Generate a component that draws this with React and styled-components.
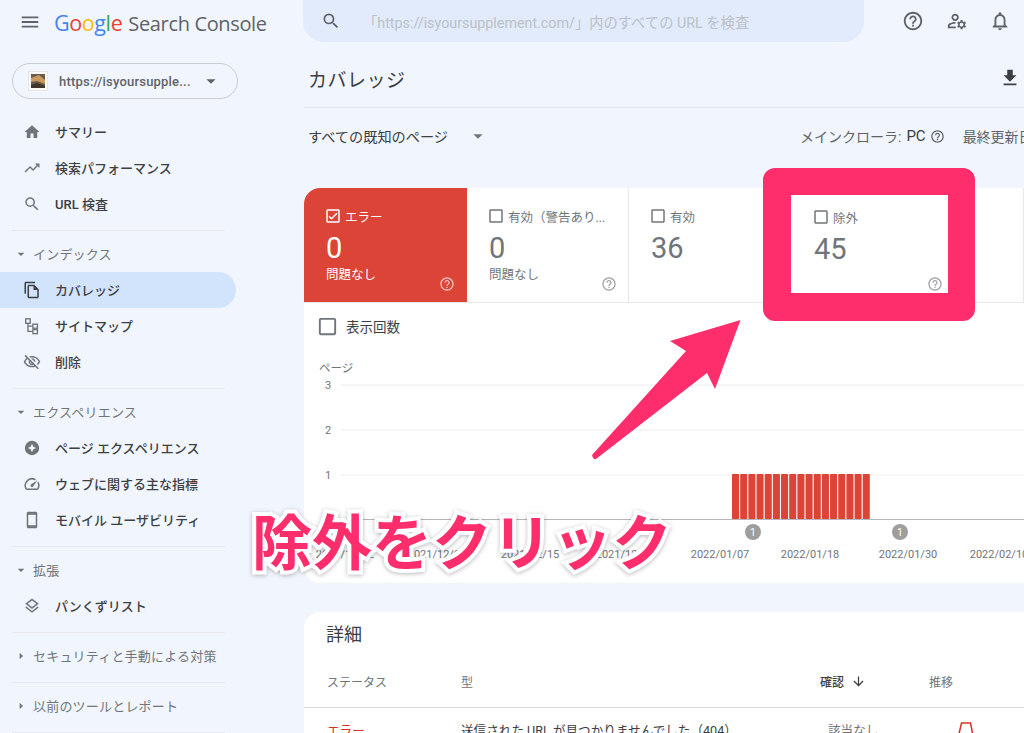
import React from 'react'
import styled, { createGlobalStyle } from 'styled-components'
import {
  MdMenu, MdHome, MdTrendingUp, MdSearch, MdOutlineFileCopy, MdOutlineVisibilityOff, MdOutlineSpeed,
  MdOutlineSmartphone, MdOutlineLayers, MdHelpOutline, MdOutlineManageAccounts, MdOutlineNotifications,
  MdFileDownload, MdArrowDropDown, MdArrowRight, MdOutlineCheckBox, MdCheckBoxOutlineBlank, MdArrowDownward,
} from 'react-icons/md'

const JP = `Roboto, "Noto Sans CJK JP", sans-serif`

const GlobalStyle = createGlobalStyle`
  html, body { margin: 0; padding: 0; }
  body { background: #f1f5fd; font-family: ${JP}; color: #3c4043; }
  * { box-sizing: border-box; }
`

const Page = styled.div`
  position: relative;
  width: 1024px;
  height: 733px;
  overflow: hidden;
  display: grid;
  grid-template-columns: 304px 720px;
  background: #f1f5fd;
`

const Sidebar = styled.aside`
  display: flex;
  flex-direction: column;
  min-width: 0;
`

const Brand = styled.div`
  height: 44px;
  display: flex;
  align-items: center;
  padding-left: 19px;
  color: #5f6368;
`

const Logo = styled.div`
  margin-left: 13px;
  display: flex;
  align-items: baseline;
  font-family: "Open Sans", sans-serif;
  font-size: 20px;
  letter-spacing: -0.35px;
  white-space: nowrap;
  color: #5f6368;
`

const GoogleWord = styled.span`
  margin-right: 6px;
  font-size: 21.5px;
  letter-spacing: -0.4px;
`

const Letter = styled.span`
  color: ${p => p.$c};
`

const PropertyPicker = styled.div`
  margin: 19px 0 0 12px;
  width: 226px;
  height: 36px;
  border: 1px solid #c9ccd1;
  border-radius: 18px;
  display: flex;
  align-items: center;
  padding-left: 15px;
  font-size: 13px;
  font-weight: 500;
  letter-spacing: 0.2px;
  color: #5f6368;
  svg.fav { margin-right: 11px; }
`

const PickerCaret = styled.span`
  display: flex;
  margin-left: 9px;
  color: #5f6368;
`

const NavList = styled.nav`
  margin-top: 15px;
  display: flex;
  flex-direction: column;
  width: 236px;
`

const NavItem = styled.div`
  height: 36px;
  display: flex;
  align-items: center;
  padding: 0 0 2px 23px;
  font-size: 13px;
  font-weight: 500;
  white-space: nowrap;
  color: #3c4043;
  border-radius: 0 18px 18px 0;
  background: ${p => (p.$active ? '#d2e3fc' : 'transparent')};
  svg { color: ${p => (p.$active ? '#3c4043' : '#70757a')}; flex: none; margin: 2px 14px 0 0; }
`

const Divider = styled.div`
  height: 1px;
  width: 213px;
  margin: ${p => p.$mt || 0}px 0 0 12px;
  background: #e6e8ee;
`

const SectionTitle = styled.div`
  height: ${p => p.$h}px;
  display: flex;
  align-items: center;
  padding: ${p => p.$top || 0}px 0 ${p => p.$bottom || 0}px 13px;
  font-size: 13px;
  letter-spacing: 0.2px;
  white-space: nowrap;
  color: #70757a;
  svg { flex: none; margin-right: 4px; }
`

const Main = styled.main`
  display: flex;
  flex-direction: column;
  min-width: 0;
`

const TopBar = styled.header`
  height: 44px;
  display: flex;
  align-items: flex-start;
`

const SearchBox = styled.div`
  width: 561px;
  height: 42px;
  margin-left: -1px;
  background: #e1ebfc;
  border-radius: 0 0 21px 21px;
  display: flex;
  align-items: center;
  padding-left: 18px;
  font-size: 14.3px;
  white-space: nowrap;
  color: #bcc0c7;
  svg { color: #5f6368; margin-right: 22px; flex: none; }
`

const TopIcons = styled.div`
  display: flex;
  align-items: center;
  gap: 21.5px;
  height: 42px;
  margin-left: 38px;
  color: #5f6368;
`

const TitleRow = styled.div`
  height: 64px;
  display: flex;
  align-items: center;
  justify-content: space-between;
  padding: 5px 3px 0 4px;
  border-bottom: 1px solid #e3e5ea;
`

const Title = styled.h1`
  margin: 0;
  font-size: 19px;
  font-weight: 400;
  letter-spacing: 0.5px;
  color: #3c4043;
`

const DownloadIcon = styled.span`
  display: flex;
  color: #3c4043;
`

const FilterRow = styled.div`
  height: 58px;
  display: flex;
  align-items: center;
  padding: 0 0 2px 4px;
  font-size: 14.2px;
  white-space: nowrap;
  color: #3c4043;
`

const FilterCaret = styled.span`
  display: flex;
  margin-left: 19px;
  color: #70757a;
`

const FilterRight = styled.div`
  margin-left: auto;
  display: flex;
  align-items: center;
  font-size: 14px;
  color: #5f6368;
  width: 224px;
  overflow: hidden;
  flex: none;
  strong { font-weight: 400; font-size: 15px; color: #3c4043; margin-left: 5px; }
  svg { margin: 0 18px 0 4px; flex: none; }
`

const Cards = styled.div`
  margin-top: 22px;
  display: grid;
  grid-template-columns: 163px 162px 162px 162px 1fr;
  height: 115px;
  background: #fff;
  border-radius: 16px 0 0 0;
  overflow: hidden;
  border-bottom: 1px solid #e6e8ee;
`

const Card = styled.div`
  position: relative;
  padding: 19px 10px 0 22px;
  background: ${p => (p.$error ? '#db4437' : '#fff')};
  color: ${p => (p.$error ? '#fff' : '#70757a')};
  border-right: 1px solid ${p => (p.$error ? '#db4437' : '#e6e8ee')};
`

const CardLabel = styled.div`
  display: flex;
  align-items: center;
  font-size: 12.5px;
  white-space: nowrap;
  height: 18px;
  svg { flex: none; margin: 0 3px 0 -2px; }
`

const CardValue = styled.div`
  font-size: 29px;
  line-height: 34px;
  margin-top: 6px;
`

const CardNote = styled.div`
  font-size: 12.5px;
  line-height: 18px;
  margin-top: 1px;
`

const CardHelp = styled.span`
  position: absolute;
  right: 11px;
  bottom: 10px;
  display: flex;
  opacity: 0.65;
`

const ChartPanel = styled.section`
  height: 280px;
  background: #fff;
  border-radius: 0 0 0 16px;
  display: flex;
  flex-direction: column;
`

const ImpressionRow = styled.div`
  height: 48px;
  padding: 0 0 2px 12px;
  display: flex;
  align-items: center;
  font-size: 13.5px;
  color: #3c4043;
  svg { color: #70757a; margin-right: 7px; }
`

const DetailCard = styled.section`
  margin-top: 29px;
  flex: 1;
  background: #fff;
  border-radius: 16px 0 0 0;
`

const DetailTitle = styled.h2`
  margin: 0;
  height: 45px;
  padding: 9px 0 0 22px;
  font-size: 18px;
  line-height: 27px;
  font-weight: 400;
  color: #3c4043;
`

const TableRow = styled.div`
  display: grid;
  grid-template-columns: 134px 359px 109px 1fr;
  align-items: center;
  padding-left: 23px;
  height: ${p => p.$h}px;
  font-size: ${p => p.$size}px;
  white-space: nowrap;
  color: #70757a;
  border-bottom: ${p => (p.$line ? '1px solid #d9dbdf' : 'none')};
  padding-bottom: ${p => (p.$line ? 2 : 0)}px;
`

const SortHead = styled.span`
  display: flex;
  align-items: center;
  gap: 7px;
  font-weight: 500;
  color: #3c4043;
`

const ErrorCell = styled.span`
  color: #d93025;
`

const TypeCell = styled.span`
  color: #3c4043;
`

const MutedCell = styled.span`
  padding-left: 8px;
`

const TrendCell = styled.span`
  display: flex;
  padding-left: ${p => p.$indent || 0}px;
`

const Highlight = styled.div`
  position: absolute;
  left: 763px;
  top: 168px;
  width: 212px;
  height: 153px;
  border: solid #fe2e6c;
  border-width: 27px 27px 28px 28px;
  border-radius: 12px;
  background: #fff;
  padding: 13px 0 0 23px;
  color: #70757a;
`

const HighlightHelp = styled.span`
  position: absolute;
  right: 5px;
  bottom: 1px;
  display: flex;
  opacity: 0.65;
`

const ArrowOverlay = styled.svg`
  position: absolute;
  left: 585px;
  top: 315px;
`

const Callout = styled.div`
  position: absolute;
  left: 252px;
  top: 499px;
  font-family: "Noto Sans CJK JP", sans-serif;
  font-weight: 700;
  font-size: 60px;
  line-height: 80px;
  letter-spacing: 0;
  white-space: nowrap;
  color: #fe2e6c;
  -webkit-text-stroke: 8px #fff;
  paint-order: stroke fill;
  filter: drop-shadow(0 1px 2px rgba(0, 0, 0, 0.28));
`

const G_LETTERS = [['G', '#4285f4'], ['o', '#ea4335'], ['o', '#fbbc05'], ['g', '#4285f4'], ['l', '#34a853'], ['e', '#ea4335']]

const BAR_COUNT = 17
const DATES = [
  ['2021/11/22', 41], ['2021/12/03', 133], ['2021/12/15', 226], ['2021/12/26', 321],
  ['2022/01/07', 416], ['2022/01/18', 506], ['2022/01/30', 604], ['2022/02/10', 695],
]

function Favicon() {
  return (
    <svg className="fav" width="20" height="20" viewBox="0 0 20 20">
      <rect x="0.5" y="0.5" width="19" height="19" fill="#fbfaf7" stroke="#e8e6e1" />
      <rect x="3" y="3" width="14" height="14" fill="#6b5a4a" />
      <path d="M3 7 L11 4 L17 9 L17 13 L9 10 L3 11 Z" fill="#c9995f" />
      <path d="M3 14 L9 12 L17 15 L17 17 L3 17 Z" fill="#3f352d" />
    </svg>
  )
}

function SitemapIcon() {
  return (
    <svg width="18" height="18" viewBox="0 0 20 20" fill="none" stroke="currentColor" strokeWidth="1.5">
      <rect x="3" y="2" width="5" height="5" />
      <rect x="11" y="8" width="5" height="4.5" />
      <rect x="11" y="14" width="5" height="4.5" />
      <path d="M5.5 7 V16 H11 M5.5 10.2 H11" />
    </svg>
  )
}

function ExperienceIcon() {
  return (
    <svg width="18" height="18" viewBox="0 0 20 20">
      <circle cx="10" cy="10" r="8" fill="currentColor" />
      <path d="M10 5.2 L11.5 8.5 L14.8 10 L11.5 11.5 L10 14.8 L8.5 11.5 L5.2 10 L8.5 8.5 Z" fill="#f1f5fd" />
    </svg>
  )
}

function Chart() {
  return (
    <svg width="720" height="232" viewBox="0 0 720 232" fontFamily={JP}>
      <text x="15" y="21" fontSize="11.5" fill="#70757a">ページ</text>
      {[['3', 34], ['2', 79], ['1', 124]].map(([label, y]) => (
        <g key={label}>
          <text x="21" y={y + 4} fontSize="11" fill="#70757a">{label}</text>
          <line x1="37" x2="720" y1={y} y2={y} stroke="#ececef" />
        </g>
      ))}
      {Array.from({ length: BAR_COUNT }, (_, i) => (
        <rect key={i} x={428 + i * 8.17} y="123" width="7.1" height="45" rx="0.8" fill="#db4437" />
      ))}
      <line x1="37" x2="720" y1="168.5" y2="168.5" stroke="#b4b6ba" />
      {[449, 596].map(x => (
        <g key={x}>
          <circle cx={x} cy="181" r="8" fill="#9e9e9e" />
          <text x={x} y="185" fontSize="10.5" fill="#fff" textAnchor="middle">1</text>
        </g>
      ))}
      {DATES.map(([d, x]) => (
        <text key={d} x={x} y="207" fontSize="11" fill="#70757a" textAnchor="middle">{d}</text>
      ))}
    </svg>
  )
}

export default function App() {
  return (
    <Page>
      <GlobalStyle />
      <Sidebar>
        <Brand>
          <MdMenu size={22} />
          <Logo>
            <GoogleWord>{G_LETTERS.map(([ch, c], i) => <Letter key={i} $c={c}>{ch}</Letter>)}</GoogleWord>
            Search Console
          </Logo>
        </Brand>
        <PropertyPicker>
          <Favicon />
          https://isyoursupple...
          <PickerCaret><MdArrowDropDown size={22} /></PickerCaret>
        </PropertyPicker>
        <NavList>
          <NavItem><MdHome size={18} />サマリー</NavItem>
          <NavItem><MdTrendingUp size={18} />検索パフォーマンス</NavItem>
          <NavItem><MdSearch size={18} />URL 検査</NavItem>
          <Divider $mt={8} />
          <SectionTitle $h={41} $top={4}><MdArrowDropDown size={16} />インデックス</SectionTitle>
          <NavItem $active><MdOutlineFileCopy size={18} />カバレッジ</NavItem>
          <NavItem><SitemapIcon />サイトマップ</NavItem>
          <NavItem><MdOutlineVisibilityOff size={18} />削除</NavItem>
          <Divider $mt={8} />
          <SectionTitle $h={41} $top={4}><MdArrowDropDown size={16} />エクスペリエンス</SectionTitle>
          <NavItem><ExperienceIcon />ページ エクスペリエンス</NavItem>
          <NavItem><MdOutlineSpeed size={18} />ウェブに関する主な指標</NavItem>
          <NavItem><MdOutlineSmartphone size={18} />モバイル ユーザビリティ</NavItem>
          <Divider $mt={8} />
          <SectionTitle $h={41} $top={4}><MdArrowDropDown size={16} />拡張</SectionTitle>
          <NavItem><MdOutlineLayers size={18} />パンくずリスト</NavItem>
          <Divider $mt={8} />
          <SectionTitle $h={49} $bottom={4}><MdArrowRight size={16} />セキュリティと手動による対策</SectionTitle>
          <Divider />
          <SectionTitle $h={49} $bottom={4}><MdArrowRight size={16} />以前のツールとレポート</SectionTitle>
          <Divider />
        </NavList>
      </Sidebar>

      <Main>
        <TopBar>
          <SearchBox>
            <MdSearch size={20} />
            「https://isyoursupplement.com/」内のすべての URL を検査
          </SearchBox>
          <TopIcons>
            <MdHelpOutline size={22} />
            <MdOutlineManageAccounts size={22} />
            <MdOutlineNotifications size={22} />
          </TopIcons>
        </TopBar>
        <TitleRow>
          <Title>カバレッジ</Title>
          <DownloadIcon><MdFileDownload size={22} /></DownloadIcon>
        </TitleRow>
        <FilterRow>
          すべての既知のページ
          <FilterCaret><MdArrowDropDown size={22} /></FilterCaret>
          <FilterRight>
            メインクローラ:<strong>PC</strong>
            <MdHelpOutline size={15} />
            最終更新日
          </FilterRight>
        </FilterRow>
        <Cards>
          <Card $error>
            <CardLabel><MdOutlineCheckBox size={18} />エラー</CardLabel>
            <CardValue>0</CardValue>
            <CardNote>問題なし</CardNote>
            <CardHelp><MdHelpOutline size={16} /></CardHelp>
          </Card>
          <Card>
            <CardLabel><MdCheckBoxOutlineBlank size={18} />有効（警告あり...</CardLabel>
            <CardValue>0</CardValue>
            <CardNote>問題なし</CardNote>
            <CardHelp><MdHelpOutline size={16} /></CardHelp>
          </Card>
          <Card>
            <CardLabel><MdCheckBoxOutlineBlank size={18} />有効</CardLabel>
            <CardValue>36</CardValue>
          </Card>
          <Card />
          <Card />
        </Cards>
        <ChartPanel>
          <ImpressionRow><MdCheckBoxOutlineBlank size={23} />表示回数</ImpressionRow>
          <Chart />
        </ChartPanel>
        <DetailCard>
          <DetailTitle>詳細</DetailTitle>
          <TableRow $h={51} $size={12} $line>
            <span>ステータス</span>
            <span>型</span>
            <SortHead>確認 <MdArrowDownward size={15} /></SortHead>
            <TrendCell>推移</TrendCell>
          </TableRow>
          <TableRow $h={42} $size={12.6}>
            <ErrorCell>エラー</ErrorCell>
            <TypeCell>送信された URL が見つかりませんでした（404）</TypeCell>
            <MutedCell>該当なし</MutedCell>
            <TrendCell $indent={29}>
              <svg width="16" height="14" viewBox="0 0 16 14" fill="none" stroke="#d93025" strokeWidth="1.5">
                <path d="M0.5 14 L3.5 1 H12.5 L15 14" />
              </svg>
            </TrendCell>
          </TableRow>
        </DetailCard>
      </Main>

      <Highlight>
        <CardLabel><MdCheckBoxOutlineBlank size={18} />除外</CardLabel>
        <CardValue>45</CardValue>
        <HighlightHelp><MdHelpOutline size={16} /></HighlightHelp>
      </Highlight>
      <ArrowOverlay width="160" height="150" viewBox="0 0 160 150">
        <path d="M155.5 5 L85 26 L101 36 L7 140 Q8 145 11 144 L122 58 L130 74 Z" fill="#fe2e6c" />
      </ArrowOverlay>
      <Callout>除外をクリック</Callout>
    </Page>
  )
}
